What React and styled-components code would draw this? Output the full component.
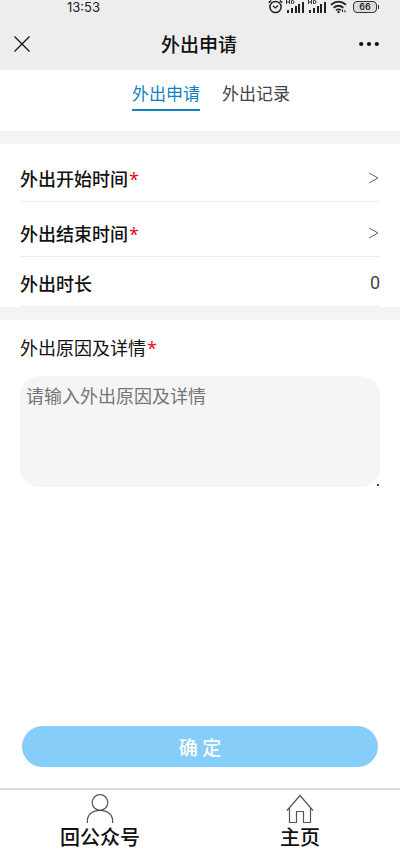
import React, { useState } from 'react';
import styled, { createGlobalStyle } from 'styled-components';

const bars = [3, 5, 7, 9, 11];

const Signal = () => (
  <svg width="19" height="14" viewBox="0 0 19 14" aria-hidden="true">
    <path d="M.5 0v4M3.500 0v4M.5 2h3M5.500 .5h1q1.500 0 1.500 1.500t-1.500 1.500h-1z" fill="none" stroke="#333" />
    {bars.map((h, i) => (
      <rect key={h} x={1 + i * 4 - (i > 2 ? 1 : 0)} y={13 - h} width="2" height={h} fill="#222" />
    ))}
  </svg>
);

const Alarm = () => (
  <svg width="15" height="14" viewBox="0 0 15 14" fill="none" stroke="#222" aria-hidden="true">
    <circle cx="7.500" cy="7" r="5.600" strokeWidth="1.500" />
    <path d="M5 6l2.500 2L10 5.500" strokeWidth="1.300" />
    <path d="M.7 2.600L3.200 .6M14.300 2.600L11.800 .6" strokeWidth="1.400" />
  </svg>
);

const Wifi = () => (
  <svg width="17" height="14" viewBox="0 0 17 14" fill="none" stroke="#222" aria-hidden="true">
    <path d="M1 4.800Q8.500 -1.600 16 4.800" strokeWidth="1.800" />
    <path d="M3.600 7.800Q8.500 3.600 13.400 7.800" strokeWidth="1.800" />
    <path d="M6 10.300Q8.500 8.300 11 10.300" strokeWidth="1.600" />
    <circle cx="8.500" cy="12" r="1.200" fill="#222" stroke="none" />
    <path d="M12.500 12v-2.500M15 10v2.500" strokeWidth="1" />
  </svg>
);

const Chevron = () => (
  <svg width="12" height="12" viewBox="0 0 12 12" fill="none" stroke="#666" aria-hidden="true">
    <path d="M1 1l9 5l-9 5" />
  </svg>
);

const Person = () => (
  <svg width="28" height="30" viewBox="0 0 28 30" fill="none" stroke="#555" strokeWidth="1.200" aria-hidden="true">
    <circle cx="14" cy="8.500" r="7.800" />
    <path d="M1.300 29v-1.500C1.300 20.500 6.500 16.300 14 16.300s12.700 4.200 12.700 11.200V29" />
  </svg>
);

const House = () => (
  <svg width="28" height="30" viewBox="0 0 28 30" fill="none" stroke="#555" strokeWidth="1.200" aria-hidden="true">
    <path d="M1 16.500L14 1.500l13 15M3.500 14v14.500h7v-11h7v11h7V14" />
  </svg>
);

const App = () => {
  const [tab, setTab] = useState('apply');
  const [reason, setReason] = useState('');

  return (
    <Page>
      <GlobalStyle />
      <StatusBar>
        <time>13:53</time>
        <StatusIcons>
          <Alarm />
          <Signal />
          <Signal />
          <Wifi />
          <Battery>66</Battery>
        </StatusIcons>
      </StatusBar>
      <TitleBar>
        <IconButton type="button" aria-label="关闭">
          <svg width="16" height="16" viewBox="0 0 16 16" stroke="#111" strokeWidth="1.300">
            <path d="M.5 .5l15 15M15.500 .5l-15 15" />
          </svg>
        </IconButton>
        <h1>外出申请</h1>
        <IconButton type="button" aria-label="更多" $end>
          <svg width="20" height="6" viewBox="0 0 20 6" fill="#111">
            <circle cx="2.200" cy="3" r="2.100" />
            <circle cx="10" cy="3" r="2.100" />
            <circle cx="17.800" cy="3" r="2.100" />
          </svg>
        </IconButton>
      </TitleBar>
      <Tabs>
        <Tab type="button" $active={tab === 'apply'} onClick={() => setTab('apply')}>
          外出申请
        </Tab>
        <Tab type="button" $active={tab === 'records'} onClick={() => setTab('records')}>
          外出记录
        </Tab>
      </Tabs>

      <Form onSubmit={(e) => e.preventDefault()}>
        <Fields>
          <PickerRow type="button">
            <span>
              外出开始时间<Required>*</Required>
            </span>
            <Chevron />
          </PickerRow>
          <PickerRow type="button">
            <span>
              外出结束时间<Required>*</Required>
            </span>
            <Chevron />
          </PickerRow>
          <DurationRow>
            <span>外出时长</span>
            <Duration>0</Duration>
          </DurationRow>
        </Fields>
        <Reason>
          <label htmlFor="reason">
            外出原因及详情<Required>*</Required>
          </label>
          <textarea
            id="reason"
            placeholder="请输入外出原因及详情"
            value={reason}
            onChange={(e) => setReason(e.target.value)}
          />
        </Reason>
        <Submit type="submit">确 定</Submit>
      </Form>

      <BottomNav>
        <a href="#account">
          <Person />
          回公众号
        </a>
        <a href="#home">
          <House />
          主页
        </a>
      </BottomNav>
    </Page>
  );
};

export default App;

const GlobalStyle = createGlobalStyle`
  * {
    box-sizing: border-box;
  }

  body {
    margin: 0;
    background: #fff;
  }

  body, button, textarea {
    font-family: 'Noto Sans CJK SC', sans-serif;
  }

  button {
    border: 0;
    padding: 0;
    background: none;
    cursor: pointer;
  }

  svg {
    display: block;
    flex: none;
  }
`;

const Page = styled.div`
  display: flex;
  flex-direction: column;
  min-height: 100vh;
  color: #111;
`;

const StatusBar = styled.div`
  display: flex;
  align-items: center;
  justify-content: space-between;
  height: 14px;
  padding: 0 23px 0 67px;
  background: #ededed;

  time {
    font: 400 13px/14px Inter, sans-serif;
    color: #222;
  }
`;

const StatusIcons = styled.div`
  display: flex;
  align-items: center;
  gap: 3px;
`;

const Battery = styled.span`
  position: relative;
  width: 24px;
  margin-left: 3px;
  border: 1px solid #333;
  border-radius: 4px;
  background: #ddd;
  font: 500 9px/10px Inter, sans-serif;
  text-align: center;

  &::after {
    content: '';
    position: absolute;
    top: 3px;
    right: -3px;
    width: 1px;
    height: 4px;
    background: #333;
  }
`;

const TitleBar = styled.header`
  display: grid;
  grid-template-columns: 1fr auto 1fr;
  align-items: center;
  height: 56px;
  padding: 3px 16px 0 14px;
  background: #ededed;

  h1 {
    margin: 0;
    font-size: 19px;
    font-weight: 500;
    line-height: 28px;
  }
`;

const IconButton = styled.button`
  justify-self: ${({ $end }) => ($end ? 'end' : 'start')};
  padding-right: ${({ $end }) => ($end ? '5px' : '0')};
`;

const Tabs = styled.nav`
  display: flex;
  justify-content: center;
  align-items: flex-start;
  gap: 22px;
  padding: 9px 0 20px;
  padding-left: 22px;
  border-bottom: 13px solid #f4f4f4;
`;

const Tab = styled.button`
  padding-bottom: 3px;
  border-bottom: 2px solid ${({ $active }) => ($active ? '#1482c0' : 'transparent')};
  font-size: 17px;
  line-height: 27px;
  color: ${({ $active }) => ($active ? '#1482c0' : '#444')};
`;

const Form = styled.form`
  flex: 1;
  display: flex;
  flex-direction: column;
`;

const Fields = styled.div`
  padding: 3px 20px 0;
  border-bottom: 13px solid #f4f4f4;
`;

const PickerRow = styled.button`
  display: flex;
  align-items: center;
  justify-content: space-between;
  width: 100%;
  padding: 18px 0 10px;
  border-bottom: 1px solid #eee;
  font-size: 18px;
  font-weight: 500;
  line-height: 26px;
  color: #111;
`;

const DurationRow = styled(PickerRow).attrs({ as: 'div' })`
  padding-top: 13px;
`;

const Duration = styled.output`
  font-family: Roboto, sans-serif;
  font-weight: 400;
  color: #444;
`;

const Required = styled.span`
  margin-left: 1px;
  font-family: 'Open Sans', sans-serif;
  line-height: 1;
  color: #e60012;
`;

const Reason = styled.div`
  display: flex;
  flex-direction: column;
  gap: 16px;
  padding: 14px 20px;

  label {
    font-size: 18px;
    line-height: 26px;
  }

  textarea {
    width: 100%;
    height: 111px;
    padding: 7px 6px;
    border: 0;
    border-radius: 20px;
    background: #f5f5f5;
    font-size: 18px;
    line-height: 24px;
  }

  textarea::placeholder {
    color: #757575;
  }

  textarea::-webkit-resizer {
    background: linear-gradient(#444, #444) right 1px bottom 1px / 2px 2px no-repeat;
  }
`;

const Submit = styled.button`
  height: 41px;
  margin: auto 22px 21px;
  border-radius: 21px;
  background: #87cdfa;
  font-size: 19px;
  font-weight: 500;
  color: #fff;
`;

const BottomNav = styled.nav`
  display: grid;
  grid-template-columns: 1fr 1fr;
  border-top: 2px solid #ddd;

  a {
    display: flex;
    flex-direction: column;
    align-items: center;
    padding-top: 4px;
    font-size: 20px;
    font-weight: 500;
    line-height: 26px;
    color: #111;
    text-decoration: none;
  }
`;
